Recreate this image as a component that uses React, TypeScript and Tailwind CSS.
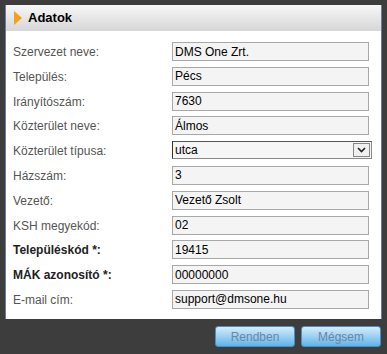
const rows: { label: string; value: string; bold?: boolean; select?: boolean }[] = [
  { label: "Szervezet neve:", value: "DMS One Zrt." },
  { label: "Település:", value: "Pécs" },
  { label: "Irányítószám:", value: "7630" },
  { label: "Közterület neve:", value: "Álmos" },
  { label: "Közterület típusa:", value: "utca", select: true },
  { label: "Házszám:", value: "3" },
  { label: "Vezető:", value: "Vezető Zsolt" },
  { label: "KSH megyekód:", value: "02" },
  { label: "Településkód *:", value: "19415", bold: true },
  { label: "MÁK azonosító *:", value: "00000000", bold: true },
  { label: "E-mail cím:", value: "support@dmsone.hu" },
]

function Field({ value, select }: { value: string; select?: boolean }) {
  if (select) {
    return (
      <div className="flex h-[18px] w-[200px] items-center border border-[#8a8a8a] border-l-[#333] border-t-[#555] bg-[#f6f6f6] pl-[2px] text-[12px] text-black">
        <span className="flex-1">{value}</span>
        <span className="mr-[1px] flex h-[14px] w-[17px] items-center justify-center border border-[#888] bg-[#f0f0f0]">
          <svg width="9" height="6" viewBox="0 0 9 6">
            <path d="M1 1l3.5 3.5L8 1" fill="none" stroke="#222" strokeWidth="1.6" />
          </svg>
        </span>
      </div>
    )
  }
  return (
    <div className="flex h-[19px] w-[197px] items-center border border-[#a8a8a8] bg-[#f4f4f4] pl-[2px] text-[12px] text-black">
      {value}
    </div>
  )
}

export default function App() {
  return (
    <div className="h-[354px] w-[387px] bg-[#3d3d3d] pt-[5px] font-['Liberation_Sans',Arial,sans-serif]">
      <div className="ml-[5px] h-[314px] w-[377px] border-x border-[#6e7aa0] bg-white">
        <div className="flex h-[26px] items-center gap-[6px] bg-gradient-to-b from-[#f7f7f7] to-[#d6d6d6] pl-[8px]">
          <svg width="8" height="14" viewBox="0 0 8 14">
            <path d="M0 0L8 7L0 14Z" fill="#f2a11c" />
          </svg>
          <span className="text-[13px] font-bold text-black">Adatok</span>
        </div>
        <div className="flex flex-col pt-[11px]">
          {rows.map((r) => (
            <div key={r.label} className="flex h-[24.8px] items-start">
              <span
                className={
                  "w-[166px] pl-[7px] pt-[1px] text-[12px] " +
                  (r.bold ? "font-bold text-[#222]" : "text-[#555]")
                }
              >
                {r.label}
              </span>
              <Field value={r.value} select={r.select} />
            </div>
          ))}
        </div>
      </div>
      <div className="flex justify-end gap-[6px] pr-[6px] pt-[7px]">
        {["Rendben", "Mégsem"].map((b) => (
          <button
            key={b}
            className="h-[21px] w-[80px] rounded-[3px] border border-[#4a8fc4] bg-gradient-to-b from-[#d4ecfb] to-[#5db3ea] text-[12px] text-[#6a86a6]"
          >
            {b}
          </button>
        ))}
      </div>
    </div>
  )
}
